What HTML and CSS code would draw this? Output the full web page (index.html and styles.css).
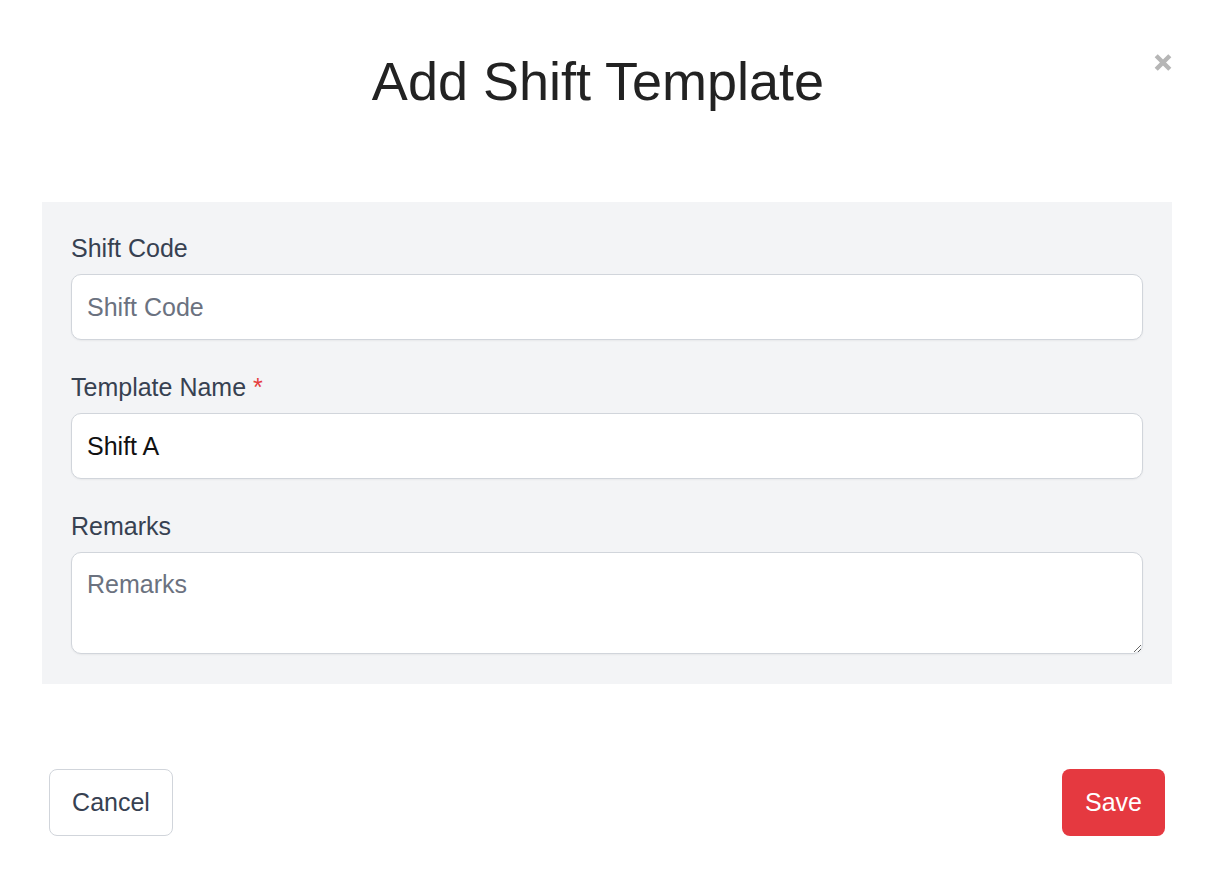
FILE: index.html
```html
<!DOCTYPE html>
<html lang="en">
<head>
<meta charset="utf-8">
<title>Add Shift Template</title>
<link rel="stylesheet" href="styles.css">
</head>
<body>
<div class="modal">
  <header class="modal-header">
    <h1 class="modal-title">Add Shift Template</h1>
    <button class="close-btn" aria-label="Close">
      <svg width="18" height="19" viewBox="0 0 18 19"><path d="M2.2 2.7 L15.8 16.3 M15.8 2.7 L2.2 16.3" stroke="#b6b6b6" stroke-width="4.4" stroke-linecap="butt"/></svg>
    </button>
  </header>
  <section class="form-panel">
    <div class="field">
      <label class="label">Shift Code</label>
      <input class="input" type="text" placeholder="Shift Code">
    </div>
    <div class="field">
      <label class="label">Template Name <span class="req">*</span></label>
      <input class="input" type="text" value="Shift A">
    </div>
    <div class="field">
      <label class="label">Remarks</label>
      <textarea class="input textarea" placeholder="Remarks"></textarea>
    </div>
  </section>
  <footer class="modal-footer">
    <button class="btn btn-cancel">Cancel</button>
    <button class="btn btn-save">Save</button>
  </footer>
</div>
</body>
</html>
```
FILE: styles.css
```css
* { box-sizing: border-box; }
html, body { margin: 0; padding: 0; background: #fff; }
body { font-family: "Liberation Sans", Arial, sans-serif; }
.modal { width: 1220px; height: 891px; padding: 0 48px 0 42px; }
.modal-header { display: flex; align-items: flex-start; padding-top: 53px; height: 202px; }
.modal-title { flex: 1; margin: 0; text-align: center; font-weight: 400; font-size: 54px; line-height: 60px; color: #222; margin-top: -2px; }
.close-btn { width: 18px; height: 19px; padding: 0; border: 0; background: none; display: flex; }
.form-panel { background: #f3f4f6; padding: 31px 29px 30px; display: flex; flex-direction: column; gap: 32px; }
.field { display: flex; flex-direction: column; }
.label { font-size: 25px; line-height: 31px; color: #374151; margin-bottom: 10px; }
.req { color: #e53e3e; }
.input { width: 100%; height: 66px; border: 1px solid #d1d5db; border-radius: 10px; background: #fff; padding: 0 15px; font-family: inherit; font-size: 25px; color: #111; outline: none; box-shadow: 0 1px 2px rgba(0,0,0,0.05); }
.input::placeholder { color: #6b7280; }
.textarea { height: 102px; padding: 16px 15px; resize: vertical; line-height: 30px; }
.modal-footer { display: flex; justify-content: space-between; padding: 85px 7px 0 7px; }
.btn { height: 67px; border-radius: 8px; font-family: inherit; font-size: 25px; cursor: pointer; padding: 0; }
.btn-cancel { width: 124px; background: #fff; border: 1px solid #d1d5db; color: #374151; }
.btn-save { width: 103px; background: #e53940; border: 0; color: #fff; }
```
